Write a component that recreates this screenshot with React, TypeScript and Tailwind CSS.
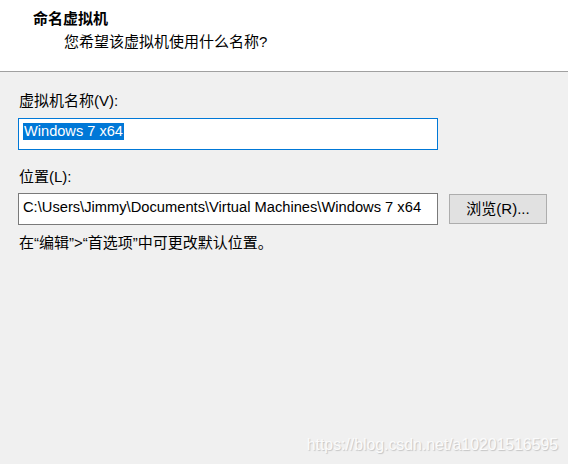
import React from 'react';

const font = { fontFamily: '"Liberation Sans", "Noto Sans CJK SC", sans-serif' };

export default function App() {
  return (
    <div className="w-[568px] h-[464px] bg-[#f0f0f0] flex flex-col text-black text-[15px] leading-[18px]" style={font}>
      {/* header */}
      <div className="h-[72px] bg-white border-b border-[#a0a0a0] pt-[10px] pl-[33px] flex flex-col gap-[5px]">
        <div className="font-bold">命名虚拟机</div>
        <div className="pl-[31px]">您希望该虚拟机使用什么名称?</div>
      </div>

      <div className="flex flex-col pl-[18px] pt-[20px]">
        <div className="pl-[1px]">虚拟机名称(V):</div>
        <div className="mt-[8px] w-[420px] h-[32px] bg-white border border-[#0078d7] flex items-center pl-[4px] pb-[6px]">
          <span className="bg-[#0078d7] text-white px-[1px] leading-[17px] text-[14.6px]">Windows 7 x64</span>
        </div>

        <div className="mt-[18px] pl-[1px]">位置(L):</div>
        <div className="mt-[7px] flex items-center gap-[11px]">
          <div className="w-[420px] h-[32px] bg-white border border-[#7a7a7a] flex items-center pl-[4px] pb-[4px] text-[14.7px]">
            C:\Users\Jimmy\Documents\Virtual Machines\Windows 7 x64
          </div>
          <button className="w-[98px] h-[30px] bg-[#e1e1e1] border border-[#adadad] flex items-center justify-center">
            浏览(R)...
          </button>
        </div>
        <div className="mt-[9px] pl-[1px]">在“编辑”&gt;“首选项”中可更改默认位置。</div>
      </div>

      <div className="flex-1 flex items-end justify-end pr-[10px] pb-[10px]">
        <span className="text-[15.8px] text-[#fbfbfb] [text-shadow:1px_1px_1px_#c4c4c4]">https://blog.csdn.net/a10201516595</span>
      </div>
    </div>
  );
}
